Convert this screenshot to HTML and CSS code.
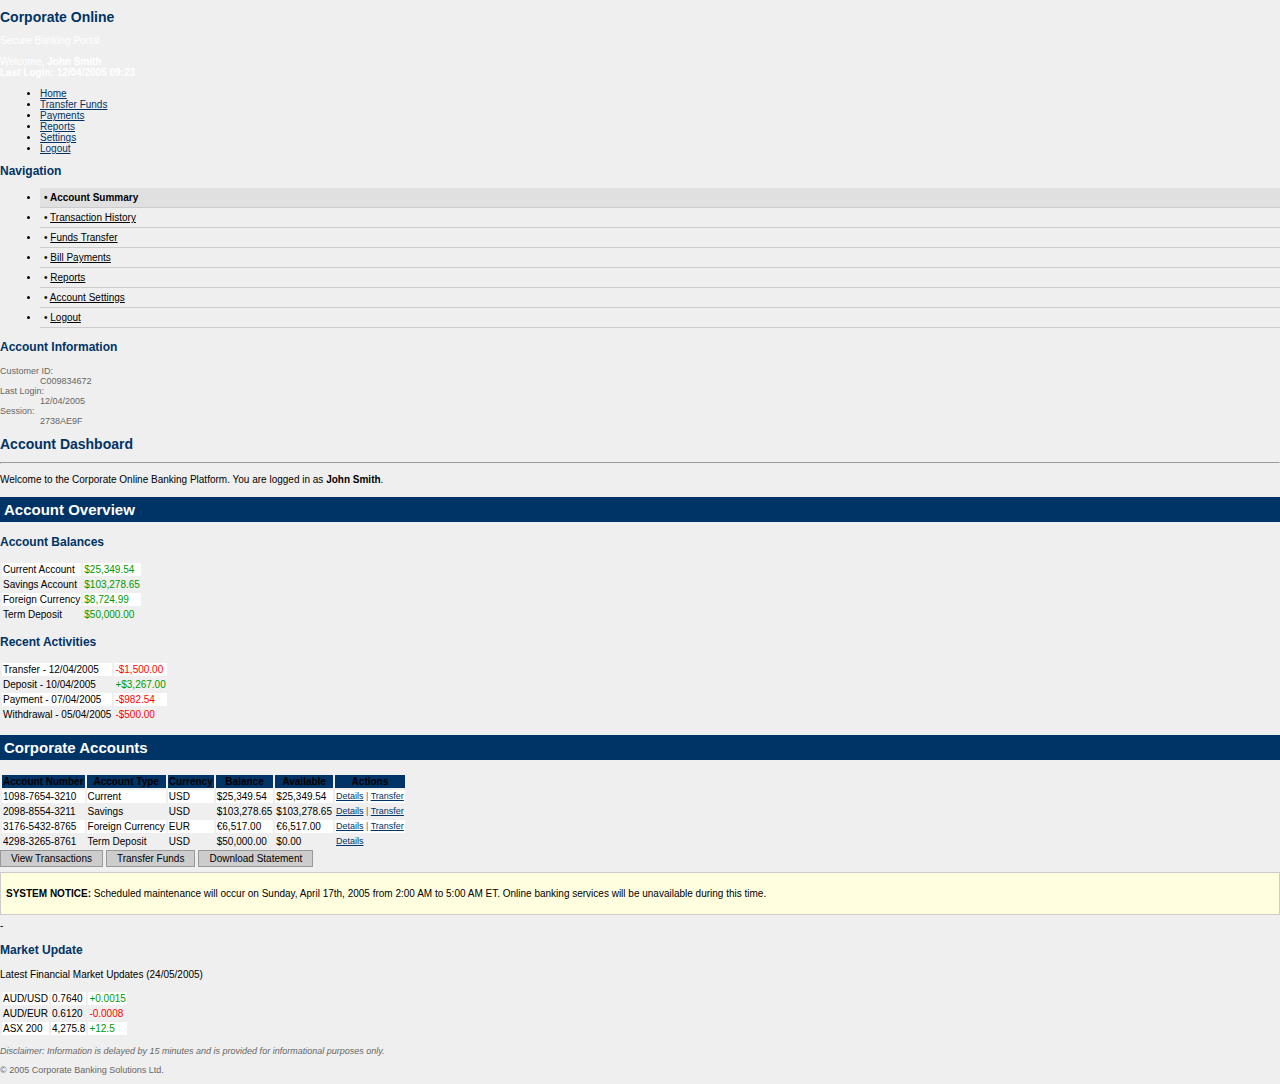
FILE: index.html
```html
<!DOCTYPE html>
<html lang="en">
<head>
<meta charset="utf-8">
<title>Corporate Online</title>
<link rel="stylesheet" href="styles.css">
</head>
<body>
<header>
  <h1 class="title">Corporate Online</h1>
  <p class="light">Secure Banking Portal</p>
  <p class="light">Welcome, <strong>John Smith</strong><br><strong>Last Login: 12/04/2005 09:23</strong></p>
  <ul class="top-menu">
    <li><a href="#">Home</a></li>
    <li><a href="#">Transfer Funds</a></li>
    <li><a href="#">Payments</a></li>
    <li><a href="#">Reports</a></li>
    <li><a href="#">Settings</a></li>
    <li><a href="#">Logout</a></li>
  </ul>
</header>
<aside>
  <h2 class="nav-title">Navigation</h2>
  <ul class="side-menu">
    <li class="active">• Account Summary</li>
    <li>• <a href="#">Transaction History</a></li>
    <li>• <a href="#">Funds Transfer</a></li>
    <li>• <a href="#">Bill Payments</a></li>
    <li>• <a href="#">Reports</a></li>
    <li>• <a href="#">Account Settings</a></li>
    <li>• <a href="#">Logout</a></li>
  </ul>
  <h3>Account Information</h3>
  <dl class="account-info">
    <dt>Customer ID:</dt><dd>C009834672</dd>
    <dt>Last Login:</dt><dd>12/04/2005</dd>
    <dt>Session:</dt><dd>2738AE9F</dd>
  </dl>
</aside>
<main>
  <h1 class="page-title">Account Dashboard</h1>
  <hr>
  <p>Welcome to the Corporate Online Banking Platform. You are logged in as <strong>John Smith</strong>.</p>

  <h2 class="bar">Account Overview</h2>
  <h3>Account Balances</h3>
  <table>
    <tr><td>Current Account</td><td class="up">$25,349.54</td></tr>
    <tr><td>Savings Account</td><td class="up">$103,278.65</td></tr>
    <tr><td>Foreign Currency</td><td class="up">$8,724.99</td></tr>
    <tr><td>Term Deposit</td><td class="up">$50,000.00</td></tr>
  </table>
  <h3>Recent Activities</h3>
  <table>
    <tr><td>Transfer - 12/04/2005</td><td class="down">-$1,500.00</td></tr>
    <tr><td>Deposit - 10/04/2005</td><td class="up">+$3,267.00</td></tr>
    <tr><td>Payment - 07/04/2005</td><td class="down">-$982.54</td></tr>
    <tr><td>Withdrawal - 05/04/2005</td><td class="down">-$500.00</td></tr>
  </table>

  <h2 class="bar">Corporate Accounts</h2>
  <table>
    <thead>
      <tr><th>Account Number</th><th>Account Type</th><th>Currency</th><th>Balance</th><th>Available</th><th>Actions</th></tr>
    </thead>
    <tbody>
      <tr><td>1098-7654-3210</td><td>Current</td><td>USD</td><td>$25,349.54</td><td>$25,349.54</td><td class="actions"><a href="#">Details</a> | <a href="#">Transfer</a></td></tr>
      <tr><td>2098-8554-3211</td><td>Savings</td><td>USD</td><td>$103,278.65</td><td>$103,278.65</td><td class="actions"><a href="#">Details</a> | <a href="#">Transfer</a></td></tr>
      <tr><td>3176-5432-8765</td><td>Foreign Currency</td><td>EUR</td><td>€6,517.00</td><td>€6,517.00</td><td class="actions"><a href="#">Details</a> | <a href="#">Transfer</a></td></tr>
      <tr><td>4298-3265-8761</td><td>Term Deposit</td><td>USD</td><td>$50,000.00</td><td>$0.00</td><td class="actions"><a href="#">Details</a></td></tr>
    </tbody>
  </table>
  <div class="buttons">
    <button type="button">View Transactions</button>
    <button type="button">Transfer Funds</button>
    <button type="button">Download Statement</button>
  </div>
  <div class="notice">
    <p><strong>SYSTEM NOTICE:</strong> Scheduled maintenance will occur on Sunday, April 17th, 2005 from 2:00 AM to 5:00 AM ET. Online banking services will be unavailable during this time.</p>
  </div>
  <div>-</div>
  <h3>Market Update</h3>
  <p>Latest Financial Market Updates (24/05/2005)</p>
  <table>
    <tr><td>AUD/USD</td><td>0.7640</td><td class="up">+0.0015</td></tr>
    <tr><td>AUD/EUR</td><td>0.6120</td><td class="down">-0.0008</td></tr>
    <tr><td>ASX 200</td><td>4,275.8</td><td class="up">+12.5</td></tr>
  </table>
  <p class="small"><em>Disclaimer: Information is delayed by 15 minutes and is provided for informational purposes only.</em></p>
</main>
<footer>
  <p class="small">© 2005 Corporate Banking Solutions Ltd.</p>
</footer>
</body>
</html>
```
FILE: styles.css
```css
body {
  margin: 0;
  background: #efefef;
  color: #000;
  font: 10px/11px "Liberation Sans", Arial, sans-serif;
}

a {
  color: #036;
}

p,
ul {
  margin: 10px 0;
}

h1,
h2,
h3 {
  color: #036;
  font-size: 12px;
  line-height: 14px;
  margin: 12px 0;
}

.title,
.page-title {
  font-size: 14px;
  line-height: 16px;
  margin: 10px 0;
}

.title {
  margin-top: 9px;
}

.light {
  color: #fff;
}

.top-menu,
.side-menu {
  padding-left: 40px;
}

.nav-title {
  margin: 10px 0;
}

.side-menu li {
  padding: 4px;
  border-bottom: 1px solid #ccc;
}

.side-menu a {
  color: #000;
}

.side-menu .active {
  background: #e0e0e0;
  font-weight: bold;
}

.account-info {
  color: #666;
  font-size: 9px;
  line-height: 10px;
  margin: 9px 0;
}

.account-info dd {
  margin-left: 40px;
}

hr {
  margin: 10px 0;
}

h2.bar {
  background: #036;
  color: #fff;
  font-size: 15px;
  line-height: 17px;
  padding: 4px;
  margin: 12px 0 13px;
}

table {
  border-collapse: separate;
  border-spacing: 2px;
}

th,
td {
  padding: 1px;
}

th {
  background: #036;
}

td {
  background: #fff;
}

tr:nth-child(even) td {
  background: #efefef;
}

td.up {
  color: #090;
}

td.down {
  color: #f00;
}

td.actions {
  color: #666;
  font-size: 9px;
  line-height: 10px;
  vertical-align: top;
}

button {
  background: #ccc;
  border: 1px solid #999;
  color: #000;
  font: inherit;
  padding: 2px 10px;
}

.buttons {
  display: flex;
  gap: 3px;
}

.notice {
  background: #ffffe0;
  border: 1px solid #ccc;
  padding: 5px;
  margin: 5px 0;
}

.small {
  color: #666;
  font-size: 9px;
  line-height: 10px;
  margin: 9px 0;
}
```
